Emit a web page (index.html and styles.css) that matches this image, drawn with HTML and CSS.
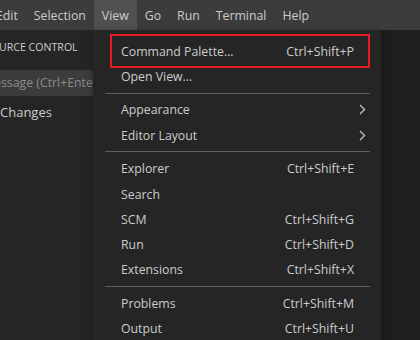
FILE: index.html
```html
<!DOCTYPE html>
<html lang="en">
<head>
    <meta charset="UTF-8">
    <title>View menu</title>
    <link rel="stylesheet" href="styles.css">
</head>
<body>
    <div class="menubar">
        <span class="menubar-item first">Edit</span>
        <span class="menubar-item">Selection</span>
        <span class="menubar-item open">View</span>
        <span class="menubar-item">Go</span>
        <span class="menubar-item">Run</span>
        <span class="menubar-item">Terminal</span>
        <span class="menubar-item">Help</span>
    </div>

    <div class="workbench">
        <div class="sidebar">
            <div class="sidebar-title">SOURCE CONTROL</div>
            <div class="commit-input">Message (Ctrl+Enter</div>
            <div class="changes">Changes</div>
        </div>
        <div class="editor"></div>

        <div class="dropdown">
            <div class="menu-row highlighted"><span>Command Palette...</span><span class="keys">Ctrl+Shift+P</span></div>
            <div class="menu-row"><span>Open View...</span></div>
            <div class="separator"></div>
            <div class="menu-row"><span>Appearance</span><span class="chevron"><svg width="7" height="11" viewBox="0 0 7 11"><path d="M1 1l4.5 4.5L1 10" fill="none" stroke="#c5c5c5" stroke-width="1.3"/></svg></span></div>
            <div class="menu-row"><span>Editor Layout</span><span class="chevron"><svg width="7" height="11" viewBox="0 0 7 11"><path d="M1 1l4.5 4.5L1 10" fill="none" stroke="#c5c5c5" stroke-width="1.3"/></svg></span></div>
            <div class="separator"></div>
            <div class="menu-row"><span>Explorer</span><span class="keys">Ctrl+Shift+E</span></div>
            <div class="menu-row"><span>Search</span></div>
            <div class="menu-row"><span>SCM</span><span class="keys">Ctrl+Shift+G</span></div>
            <div class="menu-row"><span>Run</span><span class="keys">Ctrl+Shift+D</span></div>
            <div class="menu-row"><span>Extensions</span><span class="keys">Ctrl+Shift+X</span></div>
            <div class="separator"></div>
            <div class="menu-row"><span>Problems</span><span class="keys">Ctrl+Shift+M</span></div>
            <div class="menu-row"><span>Output</span><span class="keys">Ctrl+Shift+U</span></div>
        </div>
    </div>
</body>
</html>
```

FILE: styles.css
```css
body {
    margin: 0;
    width: 420px;
    height: 340px;
    overflow: hidden;
    background-color: #1e1e1e;
    font-family: "Open Sans", "Noto Sans", sans-serif;
    font-size: 12.3px;
    color: #cccccc;
}

/* top menu bar */
.menubar {
    display: flex;
    height: 30px;
    align-items: stretch;
    background-color: #3c3c3c;
    white-space: nowrap;
}

.menubar-item {
    display: flex;
    align-items: center;
    padding: 0 8px;
}

.menubar-item.first {
    margin-left: -12px;
}

.menubar-item.open {
    background-color: #505050;
}

/* sidebar + editor */
.workbench {
    position: relative;
    display: flex;
    height: 310px;
}

.sidebar {
    width: 93px;
    background-color: #252526;
    overflow: hidden;
    white-space: nowrap;
}

.sidebar-title {
    height: 35px;
    line-height: 35px;
    font-size: 10.6px;
    margin-left: -15px;
}

.commit-input {
    height: 26px;
    line-height: 26px;
    margin-top: 5px;
    background-color: #3c3c3c;
    color: #8b8b8b;
    text-indent: -17px;
}

.changes {
    height: 22px;
    line-height: 22px;
    margin-top: 5px;
    font-size: 13px;
}

.editor {
    flex: 1;
    background-color: #1e1e1e;
}

/* the open View menu */
.dropdown {
    position: absolute;
    top: 0;
    left: 93px;
    width: 288px;
    height: 310px;
    padding-top: 8.4px;
    box-sizing: border-box;
    background-color: #252526;
    box-shadow: 0 2px 8px rgba(0, 0, 0, 0.36);
}

.menu-row {
    display: flex;
    justify-content: space-between;
    align-items: center;
    height: 25.3px;
    margin: 0 15px 0 21px;
    padding: 0 12px 0 7px;
    white-space: nowrap;
}

.menu-row.highlighted {
    outline: 2px solid #e51c23;
    outline-offset: 2px;
}

.keys {
    padding-left: 20px;
}

.chevron {
    display: flex;
    margin-right: -12px;
}

.separator {
    height: 1px;
    margin: 3.6px 11px 3.7px 12px;
    background-color: #606060;
}
```
